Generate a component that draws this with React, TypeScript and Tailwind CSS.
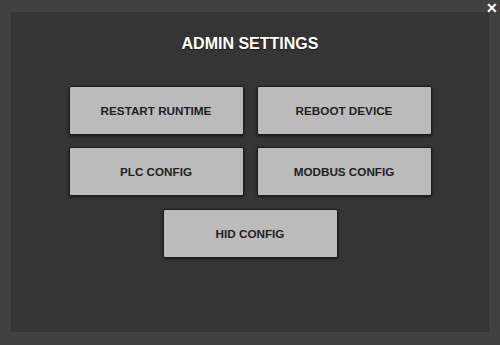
import React from "react";

const Btn = ({ label }: { label: string }) => (
  <button className="w-[175px] h-[49px] bg-[#bbbbbb] border border-[#1c1c1c] rounded-[2px] shadow-[0_1px_3px_rgba(0,0,0,0.6)] text-[#222222] font-bold text-[11.7px] leading-none flex items-center justify-center">
    {label}
  </button>
);

export default function App() {
  return (
    <div
      className="relative w-[500px] h-[345px] bg-[#414141] pt-[12px] pl-[11px]"
      style={{ fontFamily: '"Liberation Sans", Arial, sans-serif' }}
    >
      <span className="absolute left-[486px] top-[1px] text-white font-bold text-[14px] leading-none">✕</span>
      <div className="w-[478px] h-[320px] bg-[#353535] flex flex-col items-center pt-[22px]">
        <h1 className="text-white font-bold text-[16px] leading-[20px] [text-shadow:0_1px_1px_rgba(0,0,0,0.5)]">
          ADMIN SETTINGS
        </h1>
        <div className="mt-[32px] flex flex-col items-center gap-[12px]">
          <div className="flex gap-[13px]">
            <Btn label="RESTART RUNTIME" />
            <Btn label="REBOOT DEVICE" />
          </div>
          <div className="flex gap-[13px]">
            <Btn label="PLC CONFIG" />
            <Btn label="MODBUS CONFIG" />
          </div>
          <div className="flex mt-px">
            <Btn label="HID CONFIG" />
          </div>
        </div>
      </div>
    </div>
  );
}
